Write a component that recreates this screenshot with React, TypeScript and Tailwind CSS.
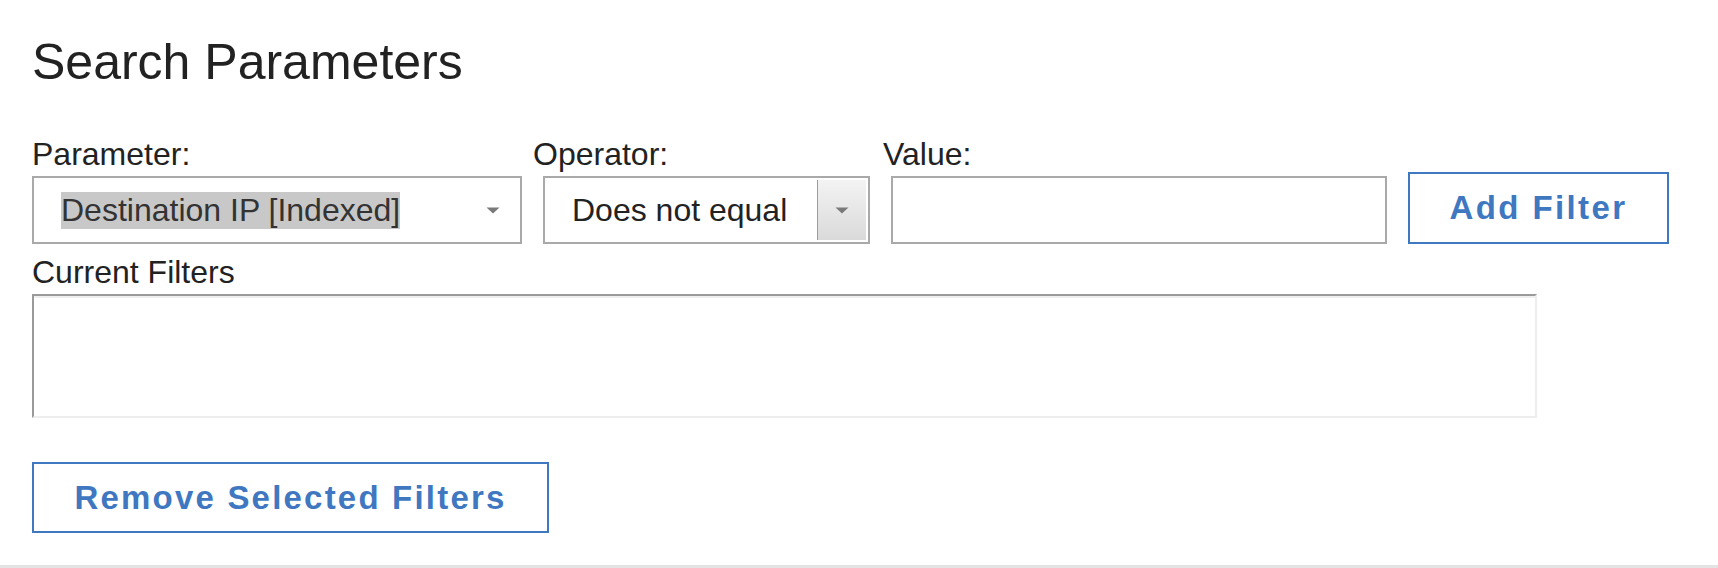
import React from 'react';

function Caret() {
  return (
    <svg width="14" height="7" viewBox="0 0 14 7" className="shrink-0">
      <path d="M0.5 0.5 H13.5 L7 6.5 Z" fill="#7a7a7a" />
    </svg>
  );
}

export default function App() {
  return (
    <div className="h-[568px] w-full bg-white border-b-[3px] border-[#e3e3e3] font-['Liberation_Sans',Arial,sans-serif] text-[#222222]">
      <div className="pl-[32px] pt-[34px]">
        <h1 className="text-[50px] leading-[57px] font-normal">Search Parameters</h1>

        {/* filter builder row */}
        <div className="mt-[45px] flex items-end">
          <div className="flex flex-col w-[490px]">
            <label className="text-[32px] leading-[37px]">Parameter:</label>
            <div className="mt-[3px] h-[68px] border-2 border-[#a9a9a9] flex items-center pl-[27px] pr-[20px]">
              <span className="bg-[#c8c8c8] text-[32px] leading-[37px] text-[#333333]">Destination IP [Indexed]</span>
              <span className="ml-auto">
                <Caret />
              </span>
            </div>
          </div>

          <div className="ml-[11px] flex flex-col">
            <label className="text-[32px] leading-[37px]">Operator:</label>
            <div className="ml-[10px] mt-[3px] h-[68px] w-[327px] border-2 border-[#a9a9a9] flex items-center p-[2px]">
              <span className="pl-[25px] text-[32px] leading-[37px] text-[#222222]">Does not equal</span>
              <span className="ml-auto h-full w-[49px] border-l-[1.5px] border-[#9c9c9c] bg-gradient-to-b from-[#f3f3f3] to-[#dadada] flex items-center justify-center">
                <Caret />
              </span>
            </div>
          </div>

          <div className="ml-[13px] flex flex-col">
            <label className="text-[32px] leading-[37px]">Value:</label>
            <input
              type="text"
              className="ml-[8px] mt-[3px] h-[68px] w-[496px] border-2 border-[#a9a9a9] outline-none px-3 text-[32px]"
            />
          </div>

          <button className="ml-[21px] h-[72px] w-[261px] border-2 border-[#3f78c1] text-[#3f78c1] text-[33px] font-bold tracking-[2.4px] flex items-center justify-center">
            Add Filter
          </button>
        </div>

        {/* current filters */}
        <div className="mt-[10px] text-[32px] leading-[37px]">Current Filters</div>
        <div className="mt-[3px] h-[124px] w-[1505px] border-t-2 border-l-2 border-t-[#9a9a9a] border-l-[#9a9a9a] border-b-2 border-r-2 border-b-[#eeeeee] border-r-[#eeeeee] shadow-[inset_0_2px_0_#efefef]" />

        <button className="mt-[44px] h-[71px] w-[517px] border-2 border-[#3f78c1] text-[#3f78c1] text-[33px] font-bold tracking-[2.2px] flex items-center justify-center">
          Remove Selected Filters
        </button>
      </div>
    </div>
  );
}
